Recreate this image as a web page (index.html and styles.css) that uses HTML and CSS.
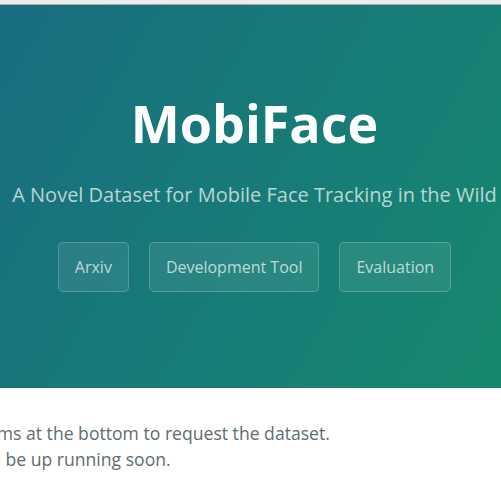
FILE: index.html
```html
<!DOCTYPE html>
<html lang="en">
<head>
<meta charset="utf-8">
<title>MobiFace</title>
<link rel="stylesheet" href="styles.css">
</head>
<body>
<div class="topbar"></div>
<section class="page-header">
  <h1 class="project-name">MobiFace</h1>
  <h2 class="project-tagline">A Novel Dataset for Mobile Face Tracking in the Wild</h2>
  <div class="btns">
    <a class="btn" href="#">Arxiv</a>
    <a class="btn" href="#">Development Tool</a>
    <a class="btn" href="#">Evaluation</a>
  </div>
</section>
<section class="main-content">
  <p class="intro">Please fill out the forms at the bottom to request the dataset.<br>Evaluation server <a href="#">will</a> be up running soon.</p>
</section>
</body>
</html>
```
FILE: styles.css
```css
html, body {
  margin: 0;
  padding: 0;
  background: #fff;
  font-family: "Open Sans", "Liberation Sans", sans-serif;
  overflow: hidden;
}
.topbar {
  height: 4px;
  background: #ececec;
  border-bottom: 1px solid #a9a9a9;
}
.page-header {
  display: flex;
  flex-direction: column;
  align-items: center;
  padding: 92px 0 96px 8px;
  background-color: #16806f;
  background-image: linear-gradient(120deg, #196d81, #16886e);
  color: #fff;
  text-align: center;
}
.project-name {
  margin: 0;
  font-size: 52px;
  line-height: 52px;
  font-weight: 700;
  white-space: nowrap;
}
.project-tagline {
  margin: 31px 0 0;
  font-size: 20px;
  line-height: 30px;
  font-weight: 400;
  color: rgba(255, 255, 255, 0.7);
  white-space: nowrap;
}
.btns {
  display: flex;
  gap: 20px;
  margin-top: 32px;
}
.btn {
  padding: 12px 16px;
  font-size: 16px;
  line-height: 24px;
  color: rgba(255, 255, 255, 0.7);
  text-decoration: none;
  background-color: rgba(255, 255, 255, 0.08);
  border: 1px solid rgba(255, 255, 255, 0.2);
  border-radius: 4.8px;
  white-space: nowrap;
}
.main-content {
  padding: 32px 0 0;
  color: #606c71;
  font-size: 17.6px;
  line-height: 26px;
}
.intro {
  margin: 0 0 0 -172px;
  white-space: nowrap;
}
.intro a {
  color: #1e6bb8;
  text-decoration: none;
}
```
